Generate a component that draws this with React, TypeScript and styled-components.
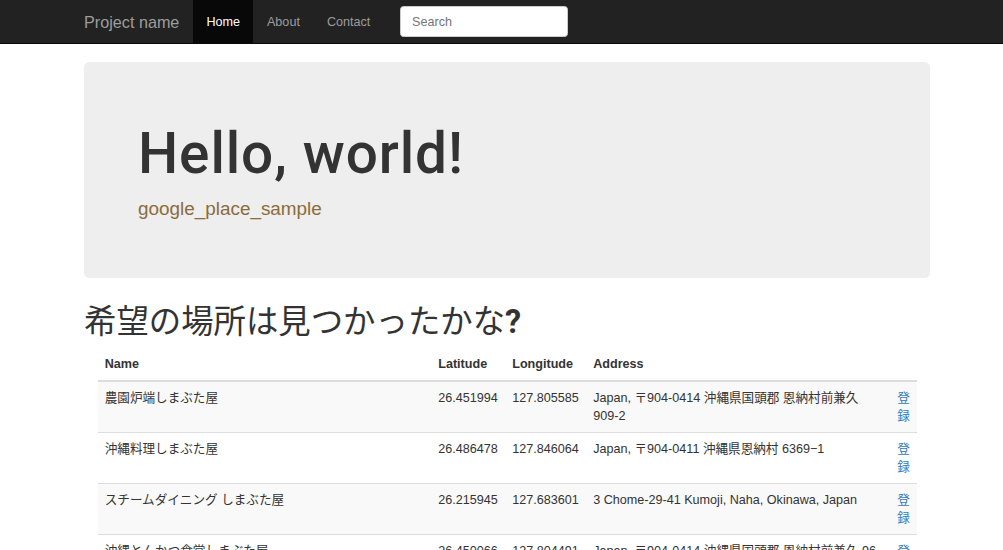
import React from 'react'
import styled, { createGlobalStyle } from 'styled-components'

const GlobalStyle = createGlobalStyle`
  html, body {
    margin: 0;
    padding: 0;
    overflow: hidden;
    background: #fff;
  }
  body {
    font-family: "Liberation Sans", Arial, "Noto Sans CJK JP", sans-serif;
    font-size: 12.6px;
    line-height: 18px;
    color: #333;
  }
  * {
    box-sizing: border-box;
  }
`

const places = [
  {
    id: '1',
    name: '農園炉端しまぶた屋',
    lat: '26.451994',
    lng: '127.805585',
    address: 'Japan, 〒904-0414 沖縄県国頭郡 恩納村前兼久 909-2',
  },
  {
    id: '2',
    name: '沖縄料理しまぶた屋',
    lat: '26.486478',
    lng: '127.846064',
    address: 'Japan, 〒904-0411 沖縄県恩納村 6369−1',
  },
  {
    id: '3',
    name: 'スチームダイニング しまぶた屋',
    lat: '26.215945',
    lng: '127.683601',
    address: '3 Chome-29-41 Kumoji, Naha, Okinawa, Japan',
  },
  {
    id: '4',
    name: '沖縄とんかつ食堂しまぶた屋',
    lat: '26.450066',
    lng: '127.804491',
    address: 'Japan, 〒904-0414 沖縄県国頭郡 恩納村前兼久 96-1',
  },
  {
    id: '5',
    name: 'しまぶた屋 北谷店',
    lat: '26.316254',
    lng: '127.757812',
    address: 'Japan, 〒904-0115 沖縄県中頭郡 北谷町美浜 9-1',
  },
]

export default function App() {
  return (
    <>
      <GlobalStyle />
      <Navbar>
        <NavContainer>
          <Brand href="#">Project name</Brand>
          <NavLink href="#" active>
            Home
          </NavLink>
          <NavLink href="#">About</NavLink>
          <NavLink href="#">Contact</NavLink>
          <SearchInput type="text" placeholder="Search" />
        </NavContainer>
      </Navbar>

      <Container>
        <Jumbotron>
          <HeroTitle>Hello, world!</HeroTitle>
          <HeroLead>google_place_sample</HeroLead>
        </Jumbotron>

        <PageTitle>
          希望の場所は見つかったかな<Question>?</Question>
        </PageTitle>

        <TableWrap>
          <Table>
            <colgroup>
              <col style={{ width: 333.5 }} />
              <col style={{ width: 74 }} />
              <col style={{ width: 81 }} />
              <col style={{ width: 304 }} />
              <col style={{ width: 27 }} />
            </colgroup>
            <thead>
              <tr>
                <Th>Name</Th>
                <Th>Latitude</Th>
                <Th>Longitude</Th>
                <Th>Address</Th>
                <Th />
              </tr>
            </thead>
            <tbody>
              {places.map(p => (
                <Row key={p.id}>
                  <Td>{p.name}</Td>
                  <Td>{p.lat}</Td>
                  <Td>{p.lng}</Td>
                  <Td>{p.address}</Td>
                  <Td>
                    <RegisterLink href="#">登録</RegisterLink>
                  </Td>
                </Row>
              ))}
            </tbody>
          </Table>
        </TableWrap>
      </Container>
    </>
  )
}

const Navbar = styled.nav`
  height: 44px;
  background-color: #222;
  border-bottom: 1px solid #080808;
`

const NavContainer = styled.div`
  display: flex;
  align-items: stretch;
  height: 43px;
  width: 846px;
  margin-left: 84px;
`

const Brand = styled.a`
  padding-right: 13.5px;
  line-height: 44px;
  font-size: 16.2px;
  color: #9d9d9d;
  text-decoration: none;
`

const NavLink = styled.a<{ active?: boolean }>`
  padding: 0 13.5px;
  line-height: 44px;
  font-size: 12.6px;
  text-decoration: none;
  color: ${p => (p.active ? '#fff' : '#9d9d9d')};
  background-color: ${p => (p.active ? '#080808' : 'transparent')};
`

const SearchInput = styled.input`
  align-self: center;
  width: 168px;
  height: 31px;
  margin-left: 16.5px;
  padding: 0 10.8px;
  border: 1px solid #ccc;
  border-radius: 3.6px;
  background: #fff;
  font-family: inherit;
  font-size: 12.6px;
  color: #555;
  outline: none;
  ::placeholder {
    color: #808080;
  }
`

const Container = styled.div`
  width: 846px;
  margin-left: 84px;
`

const Jumbotron = styled.div`
  margin-top: 18px;
  margin-bottom: 27px;
  padding: 43.2px 54px;
  border-radius: 5.4px;
  background-color: #eee;
`

const HeroTitle = styled.h1`
  margin: 18px 0 9px;
  font-family: Roboto, "Liberation Sans", sans-serif;
  font-size: 56.7px;
  line-height: 1.1;
  font-weight: 500;
  letter-spacing: 0.9px;
  color: #333;
`

const HeroLead = styled.p`
  margin: 0 0 13.5px;
  font-size: 18.9px;
  line-height: 27px;
  font-weight: 200;
  color: #8a6d3b;
`

const PageTitle = styled.h1`
  margin: 0 0 7px;
  font-size: 32.4px;
  line-height: 1.1;
  font-weight: 400;
  color: #333;
`

const Question = styled.span`
  font-family: Roboto, "Liberation Sans", sans-serif;
  font-weight: 700;
`

const TableWrap = styled.div`
  padding: 0 13.5px;
`

const Table = styled.table`
  width: 819.5px;
  table-layout: fixed;
  border-collapse: collapse;
  border-spacing: 0;
`

const Th = styled.th`
  padding: 7px 7.2px;
  text-align: left;
  vertical-align: bottom;
  font-weight: 700;
  line-height: 18px;
  border-bottom: 2px solid #ddd;
`

const Row = styled.tr`
  &:nth-child(odd) {
    background-color: #f9f9f9;
  }
`

const Td = styled.td`
  padding: 7px 7.2px;
  vertical-align: top;
  line-height: 18px;
  border-top: 1px solid #ddd;
  word-break: break-word;
`

const RegisterLink = styled.a`
  color: #337ab7;
  text-decoration: none;
`
